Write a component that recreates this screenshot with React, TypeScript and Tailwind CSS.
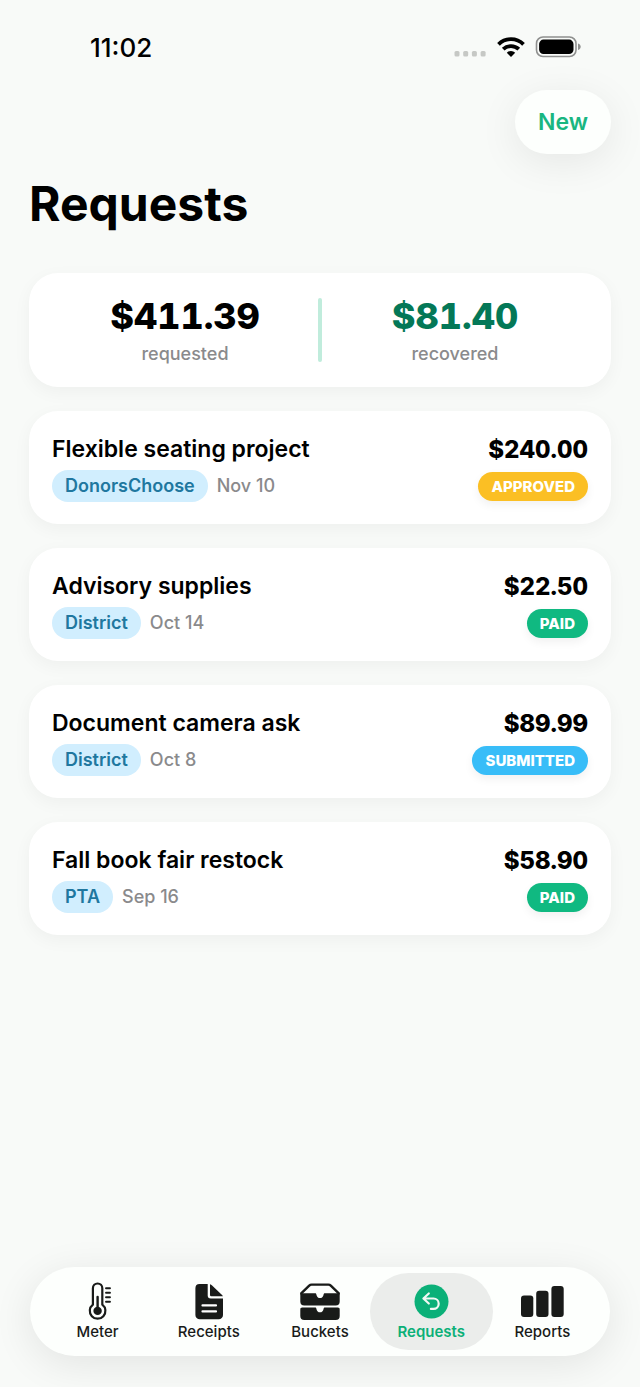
import React from "react";
import clsx from "clsx";

type Status = "approved" | "paid" | "submitted";

interface FundingRequest {
  title: string;
  source: string;
  date: string;
  amount: string;
  status: Status;
}

const requests: FundingRequest[] = [
  {
    title: "Flexible seating project",
    source: "DonorsChoose",
    date: "Nov 10",
    amount: "$240.00",
    status: "approved",
  },
  {
    title: "Advisory supplies",
    source: "District",
    date: "Oct 14",
    amount: "$22.50",
    status: "paid",
  },
  {
    title: "Document camera ask",
    source: "District",
    date: "Oct 8",
    amount: "$89.99",
    status: "submitted",
  },
  {
    title: "Fall book fair restock",
    source: "PTA",
    date: "Sep 16",
    amount: "$58.90",
    status: "paid",
  },
];

const statusColors: Record<Status, string> = {
  approved: "bg-[#fbbf24]",
  paid: "bg-[#10b981]",
  submitted: "bg-[#38bdf8]",
};

const StatusBar = () => (
  <div className="flex items-center justify-between pt-8 pr-[59px] pl-[90px]">
    <span className="text-[26px] leading-8 font-medium">11:02</span>
    <div className="flex items-center gap-[10px] pb-0.5">
      <svg width="33" height="22" viewBox="0 0 33 22" fill="#c6c8c5">
        <rect x="0.5" y="15" width="5" height="5.5" rx="1.5" />
        <rect x="9.2" y="15" width="5" height="5.5" rx="1.5" />
        <rect x="17.9" y="15" width="5" height="5.5" rx="1.5" />
        <rect x="26.6" y="15" width="5" height="5.5" rx="1.5" />
      </svg>
      <svg width="28" height="22" viewBox="0 0 28 22">
        <g fill="none" stroke="#000" strokeWidth="3.8">
          <path d="M1.5 8.3a17.8 17.8 0 0 1 25 0" />
          <path d="M6.2 13.2a11.2 11.2 0 0 1 15.6 0" />
        </g>
        <path d="M14 21l-4.2-4.3a6 6 0 0 1 8.4 0z" fill="#000" />
      </svg>
      <svg width="46" height="22" viewBox="0 0 46 22">
        <rect x="1.5" y="1" width="39.5" height="19.5" rx="6.5" fill="none" stroke="#8f908f" strokeWidth="1.6" />
        <rect x="4.1" y="3.6" width="34.4" height="14.4" rx="4.4" fill="#000" />
        <path d="M43 7.5c1.8.6 2.7 1.7 2.7 3.3s-.9 2.7-2.7 3.3z" fill="#8f908f" />
      </svg>
    </div>
  </div>
);

const SummaryItem = ({ amount, label, className }: { amount: string; label: string; className?: string }) => (
  <div className="flex flex-1 flex-col items-center">
    <span className={clsx("text-[36px] leading-[43px] font-extrabold tabular-nums", className)}>{amount}</span>
    <span className="mt-[5px] text-[18px] leading-[22px] font-medium text-[#8a8a8c]">{label}</span>
  </div>
);

const RequestCard = ({ title, source, date, amount, status }: FundingRequest) => (
  <li className="flex items-center justify-between rounded-[29px] bg-white px-[23px] py-[22px] shadow-[0_5px_18px_rgba(0,0,0,0.045)]">
    <div>
      <h2 className="text-[23px] leading-8 font-semibold">{title}</h2>
      <div className="mt-[5px] flex items-center gap-[9px]">
        <span className="rounded-full bg-[#d1eefe] px-[13px] text-[18px] leading-8 font-semibold text-[#20779f]">
          {source}
        </span>
        <span className="text-[18px] leading-8 font-medium text-[#8a8a8c]">{date}</span>
      </div>
    </div>
    <div className="flex flex-col items-end">
      <span className="text-[24px] leading-8 font-extrabold tabular-nums">{amount}</span>
      <span
        className={clsx(
          "mt-[6px] rounded-full px-[13px] text-[15px] leading-[29px] font-extrabold text-white uppercase shadow-[0_4px_10px_rgba(0,0,0,0.06)]",
          statusColors[status]
        )}
      >
        {status}
      </span>
    </div>
  </li>
);

const MeterIcon = () => (
  <svg width="44" height="38" viewBox="0 0 44 38" fill="none" stroke="currentColor">
    <path
      d="M16.9 6.2a4.7 4.7 0 0 1 9.4 0v16.5a7.8 7.8 0 1 1-9.4 0z"
      strokeWidth="2.2"
      strokeLinejoin="round"
    />
    <circle cx="21.6" cy="28.9" r="4.2" fill="currentColor" stroke="none" />
    <path d="M21.6 29V15" strokeWidth="2.4" strokeLinecap="round" />
    <path d="M30 6.3h4M30 10.8h4M30 15.3h4M30 19.8h4" strokeWidth="1.9" strokeLinecap="round" />
  </svg>
);

const ReceiptsIcon = () => (
  <svg width="44" height="38" viewBox="0 0 44 38">
    <path
      d="M12.5 2h8.2v11.5a3 3 0 0 0 3 3H36V33a4.3 4.3 0 0 1-4.3 4.3h-19A4.3 4.3 0 0 1 8.4 33V6.2A4.2 4.2 0 0 1 12.5 2z"
      fill="currentColor"
    />
    <path d="M23 2.2c.8.2 1.5.6 2.1 1.2l9.700 9.300c.6.5.9 1 1.100 1.600H24.300A1.300 1.300 0 0 1 23 13z" fill="currentColor" />
    <path d="M15.500 23.400H29M15.500 29.400H29" stroke="#fff" strokeWidth="2.200" strokeLinecap="round" />
  </svg>
);

const BucketsIcon = () => (
  <svg width="44" height="38" viewBox="0 0 44 38">
    <path
      d="M3.500 12.500v-1.300l7.700-7.600c.7-.7 1.400-1 2.400-1h16.800c1 0 1.700.3 2.400 1l7.700 7.600v1.300"
      fill="none"
      stroke="currentColor"
      strokeWidth="2.400"
      strokeLinejoin="round"
    />
    <path
      d="M2.300 10.500l1.700.8h13.100c1 0 1.200.6 1.400 1.600.4 2 1.700 3.100 3.500 3.100s3.100-1.100 3.500-3.100c.2-1 .4-1.600 1.400-1.600H40l1.700-.8v9a4 4 0 0 1-4 4H6.300a4 4 0 0 1-4-4z"
      fill="currentColor"
    />
    <path
      d="M4.200 25.600h12.900c1 0 1.200.6 1.400 1.600.4 2 1.700 3.100 3.500 3.100s3.100-1.100 3.500-3.100c.2-1 .4-1.600 1.400-1.600h12.900c1.200 0 1.900.7 1.900 1.900V34a4 4 0 0 1-4 4H6.300a4 4 0 0 1-4-4v-6.500c0-1.200.7-1.900 1.900-1.900z"
      fill="currentColor"
    />
  </svg>
);

const RequestsIcon = () => (
  <svg width="44" height="38" viewBox="0 0 44 38">
    <circle cx="22.500" cy="19.500" r="17" fill="currentColor" />
    <path
      d="M19.800 11.500l-5.400 5 5.400 5M14.800 16.500h9.700a5.200 5.200 0 0 1 0 10.400h-2.600"
      fill="none"
      stroke="#f2f8f4"
      strokeWidth="2.200"
      strokeLinecap="round"
      strokeLinejoin="round"
    />
  </svg>
);

const ReportsIcon = () => (
  <svg width="44" height="38" viewBox="0 0 44 38" fill="currentColor">
    <rect x="1" y="13.500" width="12.300" height="21.500" rx="3" />
    <rect x="16.200" y="8.700" width="12.300" height="26.300" rx="3" />
    <rect x="31.400" y="4" width="12.300" height="31" rx="3" />
  </svg>
);

const tabs = [
  { label: "Meter", icon: MeterIcon },
  { label: "Receipts", icon: ReceiptsIcon },
  { label: "Buckets", icon: BucketsIcon },
  { label: "Requests", icon: RequestsIcon },
  { label: "Reports", icon: ReportsIcon },
];

export default function App() {
  const [active, setActive] = React.useState("Requests");

  return (
    <div className="flex min-h-screen flex-col bg-[#f8faf8] font-['Inter',sans-serif] text-black">
      <StatusBar />

      <header className="px-[29px] pt-[26px]">
        <div className="flex justify-end">
          <button
            type="button"
            className="rounded-full bg-[#fdfffd] px-[23px] text-[23px] leading-[64px] font-semibold text-[#19b681] shadow-[0_8px_40px_rgba(0,0,0,0.08)]"
          >
            New
          </button>
        </div>
        <h1 className="mt-5 text-[48px] leading-[60px] font-bold">Requests</h1>
      </header>

      <main className="px-[29px] pt-[39px] pb-8">
        {/* Totals */}
        <section className="flex items-center rounded-[29px] bg-white px-[23px] py-[22px] shadow-[0_5px_18px_rgba(0,0,0,0.045)]">
          <SummaryItem amount="$411.39" label="requested" />
          <div className="h-16 w-1 rounded-full bg-[#c0ecdc]" />
          <SummaryItem amount="$81.40" label="recovered" className="text-[#047857]" />
        </section>

        <ul className="mt-6 space-y-6">
          {requests.map((request) => (
            <RequestCard key={request.title} {...request} />
          ))}
        </ul>
      </main>

      {/* Tab bar */}
      <nav className="mx-[30px] mt-auto mb-[31px] grid grid-cols-5 rounded-full bg-[#fdfffd] px-3 py-[6px] shadow-[0_8px_40px_rgba(0,0,0,0.09)]">
        {tabs.map(({ label, icon: Icon }) => (
          <button
            key={label}
            type="button"
            onClick={() => setActive(label)}
            className={clsx(
              "-mx-[6px] flex flex-col items-center gap-0.5 rounded-full pt-[9px] pb-2 text-[15px] leading-5",
              active === label ? "bg-[#ebedeb] font-semibold text-[#0bb078]" : "font-medium text-[#191b19]"
            )}
          >
            <Icon />
            {label}
          </button>
        ))}
      </nav>
    </div>
  );
}
